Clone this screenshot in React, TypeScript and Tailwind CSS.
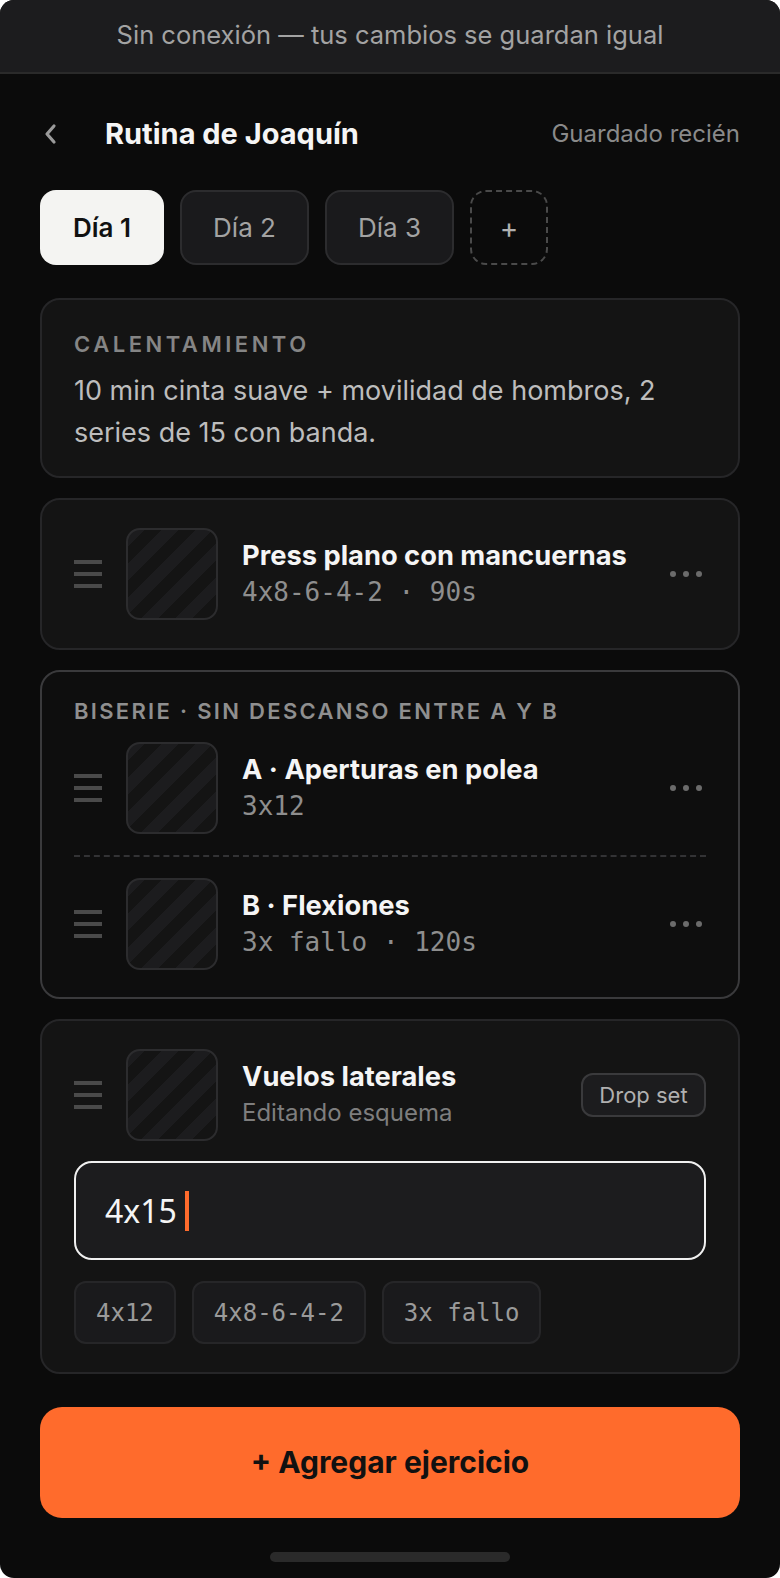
import React from "react";

type Exercise = {
  id: string;
  name: string;
  scheme: string;
};

const SANS = "font-[Inter,'Noto_Sans',sans-serif]";
const MONO = "font-['DejaVu_Sans_Mono',monospace]";

function DragHandle() {
  return (
    <div className="flex w-[28px] shrink-0 flex-col gap-[8px]">
      <span className="h-[4px] w-full bg-[#4a4a4a]" />
      <span className="h-[4px] w-full bg-[#4a4a4a]" />
      <span className="h-[4px] w-full bg-[#4a4a4a]" />
    </div>
  );
}

function Thumb() {
  return (
    <div className="h-[92px] w-[92px] shrink-0 rounded-[14px] border-2 border-[#2c2c2e] bg-[repeating-linear-gradient(135deg,#1c1c1e_0px,#1c1c1e_12px,#141414_12px,#141414_24px)]" />
  );
}

function MoreDots() {
  return (
    <button type="button" className="flex shrink-0 items-center gap-[7px] pr-[4px]">
      <span className="h-[6px] w-[6px] rounded-full bg-[#6b6b6b]" />
      <span className="h-[6px] w-[6px] rounded-full bg-[#6b6b6b]" />
      <span className="h-[6px] w-[6px] rounded-full bg-[#6b6b6b]" />
    </button>
  );
}

function ExerciseRow({ exercise }: { exercise: Exercise }) {
  return (
    <div className="flex items-center">
      <DragHandle />
      <div className="ml-[24px]">
        <Thumb />
      </div>
      <div className="ml-[24px] min-w-0 flex-1">
        <p className="text-[27.3px] font-bold leading-[36px] text-[#f5f5f5]">{exercise.name}</p>
        <p className={`${MONO} text-[26px] leading-[36px] text-[#8e8e8e]`}>{exercise.scheme}</p>
      </div>
      <MoreDots />
    </div>
  );
}

const days = ["Día 1", "Día 2", "Día 3"];
const presets = ["4x12", "4x8-6-4-2", "3x fallo"];

export default function App() {
  return (
    <div className={`${SANS} h-[1578px] w-[780px] bg-white`}>
      <div className="flex h-full flex-col overflow-hidden rounded-[14px] bg-[#0b0b0b]">
        {/* Offline banner */}
        <div className="flex h-[74px] shrink-0 items-center justify-center border-b-2 border-[#2a2a2a] bg-[#1c1c1e] pb-[1px] text-[25.5px] text-[#a3a3a3]">
          Sin conexión — tus cambios se guardan igual
        </div>

        <div className="flex flex-1 flex-col px-[40px]">
          {/* Header */}
          <div className="mt-[32px] flex h-[56px] items-center">
            <button type="button" className="flex w-[65px] shrink-0 items-center pl-[3px]">
              <svg width="14" height="22" viewBox="0 0 14 22" fill="none">
                <path d="M11 3 L4 11 L11 19" stroke="#9a9a9a" strokeWidth="3.2" strokeLinecap="round" strokeLinejoin="round" />
              </svg>
            </button>
            <h1 className="flex-1 text-[29px] font-bold text-[#f5f5f5]">Rutina de Joaquín</h1>
            <span className="text-[24px] text-[#8a8a8a]">Guardado recién</span>
          </div>

          {/* Day tabs */}
          <div className="mt-[28px] flex h-[75px] gap-[16px]">
            {days.map((day, i) => (
              <button
                key={day}
                type="button"
                className={
                  i === 0
                    ? "w-[124px] rounded-[16px] bg-[#f4f4f2] text-[26px] font-semibold text-[#111111]"
                    : "w-[129px] rounded-[16px] border-2 border-[#2c2c2e] bg-[#1a1a1c] text-[26px] text-[#a3a3a3]"
                }
              >
                {day}
              </button>
            ))}
            <button
              type="button"
              className="w-[78px] rounded-[16px] border-2 border-dashed border-[#4a4a4a] text-[28px] text-[#b0b0b0]"
            >
              +
            </button>
          </div>

          {/* Cards */}
          <div className="mt-[33px] flex flex-col gap-[20px]">
            {/* Warm-up */}
            <section className="rounded-[20px] border-2 border-[#262628] bg-[#141414] px-[32px] pb-[22px] pt-[31px]">
              <p className="text-[22px] font-semibold uppercase leading-[26px] tracking-[0.16em] text-[#858585]">
                Calentamiento
              </p>
              <p className="mt-[13px] text-[27px] leading-[42px] text-[#bdbdbd]">
                10 min cinta suave + movilidad de hombros, 2 series de 15 con banda.
              </p>
            </section>

            {/* Single exercise */}
            <section className="rounded-[20px] border-2 border-[#262628] bg-[#141414] px-[32px] py-[28px]">
              <ExerciseRow exercise={{ id: "press", name: "Press plano con mancuernas", scheme: "4x8-6-4-2 · 90s" }} />
            </section>

            {/* Superset */}
            <section className="rounded-[20px] border-2 border-[#3a3a3c] bg-[#0e0e0e] px-[32px] pb-[27px] pt-[26px]">
              <p className="text-[22px] font-semibold uppercase leading-[26px] tracking-[0.105em] text-[#8f8f8f]">
                Biserie · sin descanso entre A y B
              </p>
              <div className="mt-[18px]">
                <ExerciseRow exercise={{ id: "a", name: "A · Aperturas en polea", scheme: "3x12" }} />
              </div>
              <div className="my-[21px] border-t-2 border-dashed border-[#333335]" />
              <ExerciseRow exercise={{ id: "b", name: "B · Flexiones", scheme: "3x fallo · 120s" }} />
            </section>

            {/* Editing */}
            <section className="rounded-[20px] border-2 border-[#262628] bg-[#141414] px-[32px] pb-[28px] pt-[28px]">
              <div className="flex items-center">
                <DragHandle />
                <div className="ml-[24px]">
                  <Thumb />
                </div>
                <div className="ml-[24px] min-w-0 flex-1">
                  <p className="text-[27.3px] font-bold leading-[36px] text-[#f5f5f5]">Vuelos laterales</p>
                  <p className="text-[24px] leading-[36px] text-[#7e7e7e]">Editando esquema</p>
                </div>
                <button
                  type="button"
                  className="h-[44px] w-[125px] rounded-[12px] border-2 border-[#3a3a3c] bg-[#1c1c1e] text-[22px] text-[#b0b0b0]"
                >
                  Drop set
                </button>
              </div>

              <div className="mt-[20px] flex h-[99px] items-center rounded-[18px] border-2 border-[#f0f0f0] bg-[#1c1c1e] px-[29px]">
                <span className="font-['Noto_Sans',sans-serif] text-[32px] text-[#f5f5f5]">4x15</span>
                <span className="ml-[8px] h-[40px] w-[4px] bg-[#ff6b2c]" />
              </div>

              <div className="mt-[21px] flex gap-[16px]">
                {presets.map((p) => (
                  <button
                    key={p}
                    type="button"
                    className={`${MONO} h-[63px] rounded-[12px] border-2 border-[#262628] bg-[#1a1a1c] px-[20px] text-[24px] text-[#9a9a9a]`}
                  >
                    {p}
                  </button>
                ))}
              </div>
            </section>
          </div>

          {/* Add exercise */}
          <button
            type="button"
            className="mt-[33px] h-[111px] w-full rounded-[22px] bg-[#ff6b2c] text-[30px] font-bold text-[#111111]"
          >
            + Agregar ejercicio
          </button>

          {/* Home indicator */}
          <div className="mt-auto flex justify-center pb-[16px]">
            <span className="h-[10px] w-[240px] rounded-full bg-[#2a2a2a]" />
          </div>
        </div>
      </div>
    </div>
  );
}
